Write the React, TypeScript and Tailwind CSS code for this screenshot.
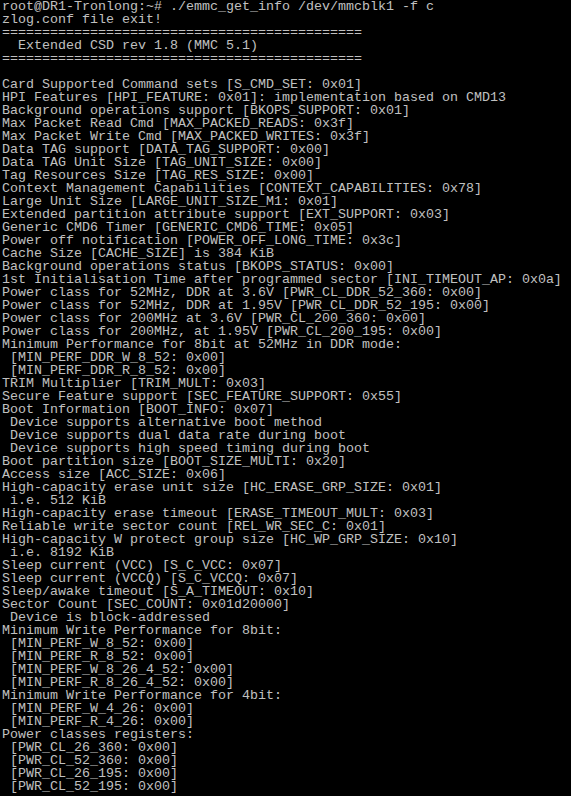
import React from "react";

const sep = "=".repeat(45);

const lines = [
  "root@DR1-Tronlong:~# ./emmc_get_info /dev/mmcblk1 -f c",
  "zlog.conf file exit!",
  sep,
  "  Extended CSD rev 1.8 (MMC 5.1)",
  sep,
  "",
  "Card Supported Command sets [S_CMD_SET: 0x01]",
  "HPI Features [HPI_FEATURE: 0x01]: implementation based on CMD13",
  "Background operations support [BKOPS_SUPPORT: 0x01]",
  "Max Packet Read Cmd [MAX_PACKED_READS: 0x3f]",
  "Max Packet Write Cmd [MAX_PACKED_WRITES: 0x3f]",
  "Data TAG support [DATA_TAG_SUPPORT: 0x00]",
  "Data TAG Unit Size [TAG_UNIT_SIZE: 0x00]",
  "Tag Resources Size [TAG_RES_SIZE: 0x00]",
  "Context Management Capabilities [CONTEXT_CAPABILITIES: 0x78]",
  "Large Unit Size [LARGE_UNIT_SIZE_M1: 0x01]",
  "Extended partition attribute support [EXT_SUPPORT: 0x03]",
  "Generic CMD6 Timer [GENERIC_CMD6_TIME: 0x05]",
  "Power off notification [POWER_OFF_LONG_TIME: 0x3c]",
  "Cache Size [CACHE_SIZE] is 384 KiB",
  "Background operations status [BKOPS_STATUS: 0x00]",
  "1st Initialisation Time after programmed sector [INI_TIMEOUT_AP: 0x0a]",
  "Power class for 52MHz, DDR at 3.6V [PWR_CL_DDR_52_360: 0x00]",
  "Power class for 52MHz, DDR at 1.95V [PWR_CL_DDR_52_195: 0x00]",
  "Power class for 200MHz at 3.6V [PWR_CL_200_360: 0x00]",
  "Power class for 200MHz, at 1.95V [PWR_CL_200_195: 0x00]",
  "Minimum Performance for 8bit at 52MHz in DDR mode:",
  " [MIN_PERF_DDR_W_8_52: 0x00]",
  " [MIN_PERF_DDR_R_8_52: 0x00]",
  "TRIM Multiplier [TRIM_MULT: 0x03]",
  "Secure Feature support [SEC_FEATURE_SUPPORT: 0x55]",
  "Boot Information [BOOT_INFO: 0x07]",
  " Device supports alternative boot method",
  " Device supports dual data rate during boot",
  " Device supports high speed timing during boot",
  "Boot partition size [BOOT_SIZE_MULTI: 0x20]",
  "Access size [ACC_SIZE: 0x06]",
  "High-capacity erase unit size [HC_ERASE_GRP_SIZE: 0x01]",
  " i.e. 512 KiB",
  "High-capacity erase timeout [ERASE_TIMEOUT_MULT: 0x03]",
  "Reliable write sector count [REL_WR_SEC_C: 0x01]",
  "High-capacity W protect group size [HC_WP_GRP_SIZE: 0x10]",
  " i.e. 8192 KiB",
  "Sleep current (VCC) [S_C_VCC: 0x07]",
  "Sleep current (VCCQ) [S_C_VCCQ: 0x07]",
  "Sleep/awake timeout [S_A_TIMEOUT: 0x10]",
  "Sector Count [SEC_COUNT: 0x01d20000]",
  " Device is block-addressed",
  "Minimum Write Performance for 8bit:",
  " [MIN_PERF_W_8_52: 0x00]",
  " [MIN_PERF_R_8_52: 0x00]",
  " [MIN_PERF_W_8_26_4_52: 0x00]",
  " [MIN_PERF_R_8_26_4_52: 0x00]",
  "Minimum Write Performance for 4bit:",
  " [MIN_PERF_W_4_26: 0x00]",
  " [MIN_PERF_R_4_26: 0x00]",
  "Power classes registers:",
  " [PWR_CL_26_360: 0x00]",
  " [PWR_CL_52_360: 0x00]",
  " [PWR_CL_26_195: 0x00]",
  " [PWR_CL_52_195: 0x00]",
];

export default function App() {
  return (
    <div className="bg-black min-h-screen w-full overflow-hidden pl-[2px] text-[#c0c0c0] font-['Liberation_Mono',monospace] text-[13.33px] leading-[13px]">
      {lines.map((line, i) => (
        <div key={i} className="whitespace-pre h-[13px]">
          {line}
        </div>
      ))}
    </div>
  );
}
